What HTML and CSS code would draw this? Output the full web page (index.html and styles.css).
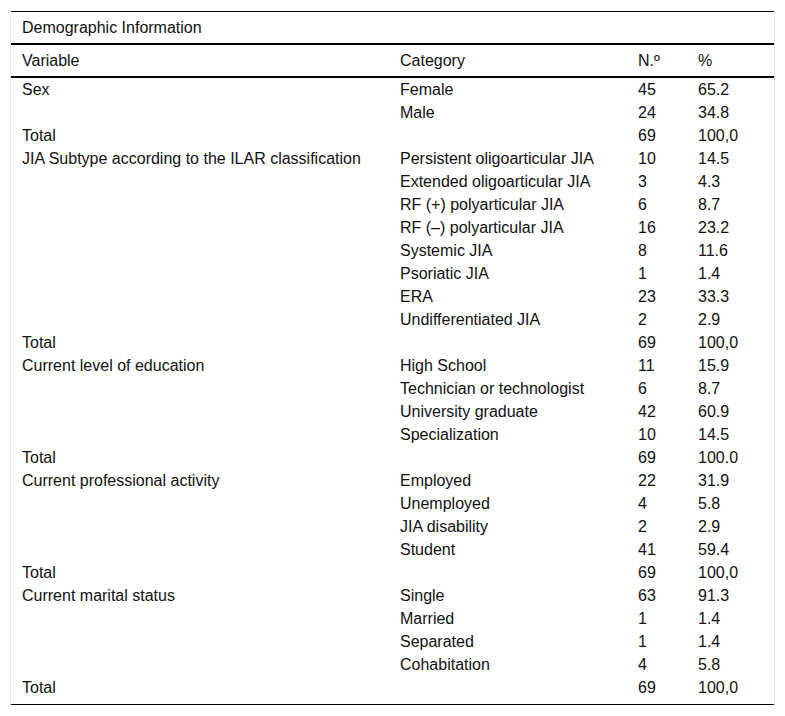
FILE: index.html
```html
<!DOCTYPE html>
<html lang="en">
<head>
<meta charset="utf-8">
<title>Demographic Information</title>
<link rel="stylesheet" href="styles.css">
</head>
<body>
<div class="table-wrap">
  <table class="demo">
    <colgroup>
      <col class="c-var">
      <col class="c-cat">
      <col class="c-n">
      <col class="c-pct">
    </colgroup>
    <thead>
      <tr class="title-row"><th colspan="4">Demographic Information</th></tr>
      <tr class="head-row"><th>Variable</th><th>Category</th><th>N.º</th><th>%</th></tr>
    </thead>
    <tbody>
      <tr class="first"><td>Sex</td><td>Female</td><td>45</td><td>65.2</td></tr>
      <tr><td></td><td>Male</td><td>24</td><td>34.8</td></tr>
      <tr><td>Total</td><td></td><td>69</td><td>100,0</td></tr>
      <tr><td>JIA Subtype according to the ILAR classification</td><td>Persistent oligoarticular JIA</td><td>10</td><td>14.5</td></tr>
      <tr><td></td><td>Extended oligoarticular JIA</td><td>3</td><td>4.3</td></tr>
      <tr><td></td><td>RF (+) polyarticular JIA</td><td>6</td><td>8.7</td></tr>
      <tr><td></td><td>RF (&#8211;) polyarticular JIA</td><td>16</td><td>23.2</td></tr>
      <tr><td></td><td>Systemic JIA</td><td>8</td><td>11.6</td></tr>
      <tr><td></td><td>Psoriatic JIA</td><td>1</td><td>1.4</td></tr>
      <tr><td></td><td>ERA</td><td>23</td><td>33.3</td></tr>
      <tr><td></td><td>Undifferentiated JIA</td><td>2</td><td>2.9</td></tr>
      <tr><td>Total</td><td></td><td>69</td><td>100,0</td></tr>
      <tr><td>Current level of education</td><td>High School</td><td>11</td><td>15.9</td></tr>
      <tr><td></td><td>Technician or technologist</td><td>6</td><td>8.7</td></tr>
      <tr><td></td><td>University graduate</td><td>42</td><td>60.9</td></tr>
      <tr><td></td><td>Specialization</td><td>10</td><td>14.5</td></tr>
      <tr><td>Total</td><td></td><td>69</td><td>100.0</td></tr>
      <tr><td>Current professional activity</td><td>Employed</td><td>22</td><td>31.9</td></tr>
      <tr><td></td><td>Unemployed</td><td>4</td><td>5.8</td></tr>
      <tr><td></td><td>JIA disability</td><td>2</td><td>2.9</td></tr>
      <tr><td></td><td>Student</td><td>41</td><td>59.4</td></tr>
      <tr><td>Total</td><td></td><td>69</td><td>100,0</td></tr>
      <tr><td>Current marital status</td><td>Single</td><td>63</td><td>91.3</td></tr>
      <tr><td></td><td>Married</td><td>1</td><td>1.4</td></tr>
      <tr><td></td><td>Separated</td><td>1</td><td>1.4</td></tr>
      <tr><td></td><td>Cohabitation</td><td>4</td><td>5.8</td></tr>
      <tr class="last"><td>Total</td><td></td><td>69</td><td>100,0</td></tr>
    </tbody>
  </table>
</div>
</body>
</html>
```

FILE: styles.css
```css
html, body {
  margin: 0;
  padding: 0;
  background: #ffffff;
}

body {
  font-family: "Liberation Sans", Arial, sans-serif;
  font-size: 16px;
  color: #111111;
}

.table-wrap {
  margin: 11px 0 0 10px;
  width: 763px;
  border-left: 1px solid #e6e6e6;
  border-right: 1px solid #e6e6e6;
}

.demo {
  width: 763px;
  table-layout: fixed;
  border-collapse: separate;
  border-spacing: 0;
}

.c-var { width: 378px; }
.c-cat { width: 238px; }
.c-n { width: 60px; }
.c-pct { width: 87px; }

.demo th {
  font-weight: normal;
  text-align: left;
  line-height: 16px;
  padding: 8px 11px 7px 11px;
  white-space: nowrap;
}

.title-row th {
  border-top: 1px solid #000;
  border-bottom: 2px solid #000;
}

.head-row th {
  border-bottom: 2px solid #000;
}

.demo td {
  line-height: 23px;
  padding: 0 11px;
  vertical-align: top;
  white-space: nowrap;
}

.demo tr.last td {
  padding-bottom: 5px;
  border-bottom: 1px solid #000;
}
```
